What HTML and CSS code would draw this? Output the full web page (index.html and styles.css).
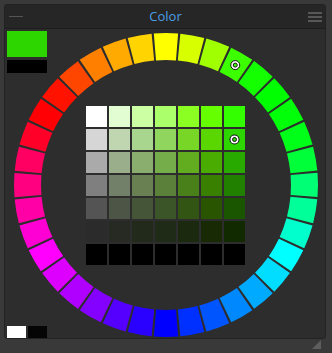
FILE: index.html
```html
<!DOCTYPE html>
<html lang="en">

<head>
    <meta charset="UTF-8">
    <title>Color</title>
    <link rel="stylesheet" href="styles.css">
</head>

<body>
    <div class="panel">
        <div class="titlebar">
            <span class="min"></span>
            <span class="title">Color</span>
            <span class="menu"><i></i><i></i><i></i></span>
        </div>

        <div class="content">
            <div class="current">
                <div class="fg"></div>
                <div class="bg"></div>
            </div>

            <div class="wheel">
                <svg class="ring" width="306" height="306" viewBox="-153 -153 306 306">
                    <circle r="138.5" stroke="#ffff00" transform="rotate(-94.59)"/>
                    <circle r="138.5" stroke="#d8ff00" transform="rotate(-84.59)"/>
                    <circle r="138.5" stroke="#a0ff00" transform="rotate(-74.59)"/>
                    <circle r="138.5" stroke="#3cff00" transform="rotate(-64.59)"/>
                    <circle r="138.5" stroke="#14ff00" transform="rotate(-54.59)"/>
                    <circle r="138.5" stroke="#00ff00" transform="rotate(-44.59)"/>
                    <circle r="138.5" stroke="#00ff08" transform="rotate(-34.59)"/>
                    <circle r="138.5" stroke="#00ff18" transform="rotate(-24.59)"/>
                    <circle r="138.5" stroke="#00ff38" transform="rotate(-14.59)"/>
                    <circle r="138.5" stroke="#00ff74" transform="rotate(-4.59)"/>
                    <circle r="138.5" stroke="#00ff99" transform="rotate(5.41)"/>
                    <circle r="138.5" stroke="#00ffcc" transform="rotate(15.41)"/>
                    <circle r="138.5" stroke="#00ffff" transform="rotate(25.41)"/>
                    <circle r="138.5" stroke="#00ddff" transform="rotate(35.41)"/>
                    <circle r="138.5" stroke="#00aaff" transform="rotate(45.41)"/>
                    <circle r="138.5" stroke="#0088ff" transform="rotate(55.41)"/>
                    <circle r="138.5" stroke="#0055ff" transform="rotate(65.41)"/>
                    <circle r="138.5" stroke="#0030ff" transform="rotate(75.41)"/>
                    <circle r="138.5" stroke="#0000ff" transform="rotate(85.41)"/>
                    <circle r="138.5" stroke="#2a00ff" transform="rotate(95.41)"/>
                    <circle r="138.5" stroke="#5500ff" transform="rotate(105.41)"/>
                    <circle r="138.5" stroke="#8400ff" transform="rotate(115.41)"/>
                    <circle r="138.5" stroke="#b000ff" transform="rotate(125.41)"/>
                    <circle r="138.5" stroke="#dd00ff" transform="rotate(135.41)"/>
                    <circle r="138.5" stroke="#ff00ff" transform="rotate(145.41)"/>
                    <circle r="138.5" stroke="#ff00d4" transform="rotate(155.41)"/>
                    <circle r="138.5" stroke="#ff00a6" transform="rotate(165.41)"/>
                    <circle r="138.5" stroke="#ff0080" transform="rotate(175.41)"/>
                    <circle r="138.5" stroke="#ff0062" transform="rotate(185.41)"/>
                    <circle r="138.5" stroke="#ff0028" transform="rotate(195.41)"/>
                    <circle r="138.5" stroke="#ff0004" transform="rotate(205.41)"/>
                    <circle r="138.5" stroke="#ff1200" transform="rotate(215.41)"/>
                    <circle r="138.5" stroke="#ff4600" transform="rotate(225.41)"/>
                    <circle r="138.5" stroke="#ff7f00" transform="rotate(235.41)"/>
                    <circle r="138.5" stroke="#ffaa00" transform="rotate(245.41)"/>
                    <circle r="138.5" stroke="#ffd400" transform="rotate(255.41)"/>
                    <!-- 选中的色相 -->
                    <g class="pin" transform="translate(69.25 -119.9)">
                        <circle class="pin-out" r="4.5"/>
                        <circle class="pin-in" r="2"/>
                    </g>
                </svg>

                <div class="grid">
                    <div style="background:#ffffff"></div>
                    <div style="background:#e3fdd3"></div>
                    <div style="background:#ccfea3"></div>
                    <div style="background:#aaff6b"></div>
                    <div style="background:#8cff22"></div>
                    <div style="background:#66ff00"></div>
                    <div style="background:#33ff00"></div>

                    <div style="background:#d6d6d6"></div>
                    <div style="background:#c0d6b0"></div>
                    <div style="background:#a9d68e"></div>
                    <div style="background:#90d65e"></div>
                    <div style="background:#78d626"></div>
                    <div style="background:#5ad600"></div>
                    <div style="background:#2ed600"><span class="mark"></span></div>

                    <div style="background:#aaaaaa"></div>
                    <div style="background:#9aae8c"></div>
                    <div style="background:#89ae6d"></div>
                    <div style="background:#76ad4b"></div>
                    <div style="background:#62ac1f"></div>
                    <div style="background:#4aac00"></div>
                    <div style="background:#28aa00"></div>

                    <div style="background:#7f7f7f"></div>
                    <div style="background:#738069"></div>
                    <div style="background:#688052"></div>
                    <div style="background:#5a803a"></div>
                    <div style="background:#4a801a"></div>
                    <div style="background:#3a8000"></div>
                    <div style="background:#228000"></div>

                    <div style="background:#545454"></div>
                    <div style="background:#4d5547"></div>
                    <div style="background:#455538"></div>
                    <div style="background:#3c5528"></div>
                    <div style="background:#325513"></div>
                    <div style="background:#2a5500"></div>
                    <div style="background:#1a5500"></div>

                    <div style="background:#2b2b2b"></div>
                    <div style="background:#262a22"></div>
                    <div style="background:#222a1c"></div>
                    <div style="background:#1f2a17"></div>
                    <div style="background:#1b2a0e"></div>
                    <div style="background:#182a03"></div>
                    <div style="background:#122a00"></div>

                    <div style="background:#000"></div>
                    <div style="background:#000"></div>
                    <div style="background:#000"></div>
                    <div style="background:#000"></div>
                    <div style="background:#000"></div>
                    <div style="background:#000"></div>
                    <div style="background:#000"></div>
                </div>
            </div>

            <div class="defaults">
                <div class="white"></div>
                <div class="black"></div>
            </div>
        </div>
    </div>

    <div class="footer">
        <svg class="grip" width="9" height="9" viewBox="0 0 9 9">
            <polygon points="9,0 9,9 0,9"/>
        </svg>
    </div>
</body>

</html>
```

FILE: styles.css
```css
* {
    padding: 0;
    margin: 0;
    box-sizing: border-box;
}

body {
    background: #393939;
    padding: 4px 6px 0 4px;
    font-family: "Open Sans", "Liberation Sans", sans-serif;
}

.panel {
    width: 322px;
    background: #2d2d2d;
    border: 1px solid #222;
    border-radius: 3px;
    overflow: hidden;
}

.titlebar {
    height: 24px;
    background: #262626;
    border-bottom: 1px solid #1d1d1d;
    display: flex;
    align-items: center;
    justify-content: space-between;
    padding: 0 3px 0 4px;
}

.min {
    width: 14px;
    height: 1px;
    background: #555;
}

.title {
    color: #4a9fe4;
    font-size: 13px;
    line-height: 1;
}

.menu {
    width: 14px;
    display: flex;
    flex-direction: column;
    gap: 2px;
}

.menu i {
    height: 2px;
    background: #575757;
}

.content {
    display: grid;
    height: 309px;
    padding: 2px;
}

.content > div {
    grid-area: 1 / 1;
}

.current {
    align-self: start;
    justify-self: start;
    display: flex;
    flex-direction: column;
    gap: 3px;
}

.current .fg {
    width: 40px;
    height: 26px;
    background: #2ed600;
}

.current .bg {
    width: 40px;
    height: 13px;
    background: #000;
}

.wheel {
    align-self: center;
    justify-self: center;
    display: grid;
    place-items: center;
    margin-left: 1px;
    margin-top: 1px;
}

.wheel > * {
    grid-area: 1 / 1;
}

.ring circle {
    fill: none;
    stroke-width: 27;
    stroke-dasharray: 22.17 900;
}

.ring .pin-out {
    fill: #fff;
    stroke: #111;
    stroke-width: 1;
    stroke-dasharray: none;
}

.ring .pin-in {
    fill: #3cff00;
    stroke: #111;
    stroke-width: 1;
    stroke-dasharray: none;
}

.grid {
    display: grid;
    grid-template-columns: repeat(7, 21px);
    grid-auto-rows: 21px;
    gap: 2px;
}

.grid div {
    display: flex;
    align-items: center;
    justify-content: center;
}

.mark {
    width: 5px;
    height: 5px;
    border-radius: 50%;
    background: #2ed600;
    border: 1px solid #111;
    box-shadow: 0 0 0 1.5px #fff, 0 0 0 2.5px #111;
}

.defaults {
    align-self: end;
    justify-self: start;
    display: flex;
    gap: 2px;
}

.defaults div {
    width: 19px;
    height: 12px;
}

.white {
    background: #fff;
}

.black {
    background: #050505;
}

.footer {
    height: 14px;
    display: flex;
    justify-content: flex-end;
    align-items: flex-start;
    padding: 1px 5px 0 0;
}

.grip polygon {
    fill: #5e5e5e;
}
```
